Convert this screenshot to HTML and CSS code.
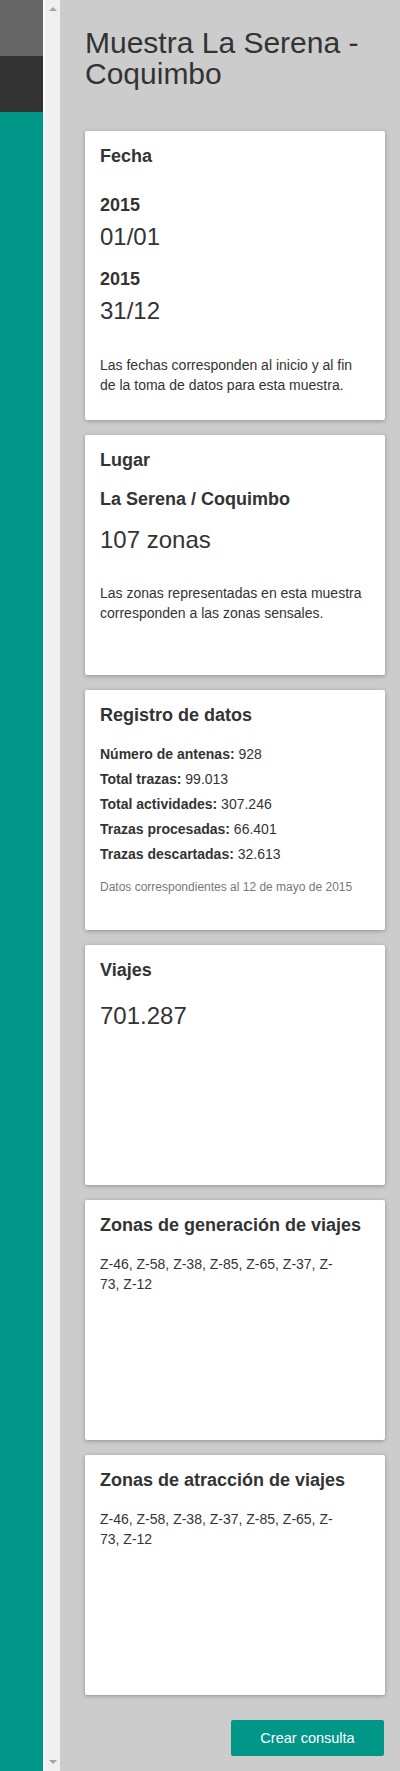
FILE: index.html
```html
<!DOCTYPE html>
<html lang="es">
<head>
<meta charset="utf-8">
<title>Muestra La Serena - Coquimbo</title>
<link rel="stylesheet" href="styles.css">
</head>
<body>
<div class="app">
  <aside class="side">
    <div class="side-top"></div>
    <div class="side-mid"></div>
    <div class="side-teal"></div>
  </aside>
  <div class="scroll">
    <span class="arrow arrow-up"></span>
    <span class="arrow arrow-down"></span>
  </div>
  <main class="main">
    <h2 class="title">Muestra La Serena - Coquimbo</h2>

    <section class="card card-fecha">
      <h4 class="card-title">Fecha</h4>
      <div class="date-block first">
        <div class="year">2015</div>
        <div class="big date">01/01</div>
      </div>
      <div class="date-block second">
        <div class="year">2015</div>
        <div class="big date">31/12</div>
      </div>
      <p class="note">Las fechas corresponden al inicio y al fin de la toma de datos para esta muestra.</p>
    </section>

    <section class="card">
      <h4 class="card-title">Lugar</h4>
      <div class="place">La Serena / Coquimbo</div>
      <div class="big zones">107 zonas</div>
      <p class="note">Las zonas representadas en esta muestra corresponden a las zonas sensales.</p>
    </section>

    <section class="card">
      <h4 class="card-title">Registro de datos</h4>
      <div class="stats">
        <div class="stat"><b>Número de antenas:</b> 928</div>
        <div class="stat"><b>Total trazas:</b> 99.013</div>
        <div class="stat"><b>Total actividades:</b> 307.246</div>
        <div class="stat"><b>Trazas procesadas:</b> 66.401</div>
        <div class="stat"><b>Trazas descartadas:</b> 32.613</div>
      </div>
      <div class="small">Datos correspondientes al 12 de mayo de 2015</div>
    </section>

    <section class="card">
      <h4 class="card-title">Viajes</h4>
      <div class="big trips">701.287</div>
    </section>

    <section class="card">
      <h4 class="card-title">Zonas de generación de viajes</h4>
      <p class="zone-list">Z-46, Z-58, Z-38, Z-85, Z-65, Z-37, Z-<wbr>73, Z-12</p>
    </section>

    <section class="card">
      <h4 class="card-title">Zonas de atracción de viajes</h4>
      <p class="zone-list">Z-46, Z-58, Z-38, Z-37, Z-85, Z-65, Z-<wbr>73, Z-12</p>
    </section>

    <div class="actions">
      <button class="btn" type="button">Crear consulta</button>
    </div>
  </main>
</div>
</body>
</html>
```
FILE: styles.css
```css
* { box-sizing: border-box; }

html, body {
  margin: 0;
  padding: 0;
}

body {
  font-family: "Liberation Sans", Arial, Helvetica, sans-serif;
  font-size: 14px;
  line-height: 20px;
  color: #333;
  background: #ccc;
}

.app {
  display: flex;
  min-height: 1771px;
}

.side {
  width: 43px;
  flex: 0 0 43px;
  display: flex;
  flex-direction: column;
}

.side-top { height: 56px; background: #666; }
.side-mid { height: 56px; background: #333; }
.side-teal { flex: 1; background: #009688; }

.scroll {
  width: 17px;
  flex: 0 0 17px;
  background: #f0f0f0;
  border-left: 2px solid #fafafa;
  display: flex;
  flex-direction: column;
  justify-content: space-between;
  align-items: center;
  padding: 7px 0 7px 0;
}

.arrow {
  width: 0;
  height: 0;
  border-left: 4px solid transparent;
  border-right: 4px solid transparent;
}

.arrow-up { border-bottom: 4px solid #a3a3a3; }
.arrow-down { border-top: 4px solid #a3a3a3; }

.main {
  flex: 1;
  padding: 27px 15px 15px 25px;
}

.title {
  margin: 0;
  font-size: 30px;
  line-height: 31px;
  font-weight: normal;
  color: #333;
}

.card {
  background: #fff;
  border-radius: 2px;
  box-shadow: 0 1px 4px rgba(0, 0, 0, 0.3);
  padding: 15px;
  min-height: 240px;
  margin-top: 15px;
}

.card-fecha { margin-top: 42px; }

.card-title {
  margin: 0;
  font-size: 18px;
  line-height: 20px;
  font-weight: bold;
}

.year, .place {
  font-size: 18px;
  line-height: 20px;
  font-weight: bold;
}

.big {
  font-size: 24px;
  line-height: 26px;
}

.date-block.first { margin-top: 29px; }
.date-block.second { margin-top: 19px; }
.date { margin-top: 9px; }

.note {
  margin: 31px 0 10px 0;
}

.place { margin-top: 19px; }
.zones { margin-top: 18px; }
.zones + .note { margin-top: 30px; }

.stats { margin-top: 17px; }
.stat { line-height: 25px; }

.small {
  margin-top: 12px;
  font-size: 12px;
  line-height: 17px;
  color: #777;
}

.trips { margin-top: 23px; }

.zone-list {
  margin: 19px 0 0 0;
  max-width: 250px;
}

.actions {
  display: flex;
  justify-content: flex-end;
  margin-top: 25px;
  padding-right: 1px;
}

.btn {
  width: 153px;
  height: 36px;
  border: 0;
  border-radius: 2px;
  background: #009688;
  color: #fff;
  font-family: "Liberation Sans", Arial, Helvetica, sans-serif;
  font-size: 14.5px;
  cursor: pointer;
}
```
